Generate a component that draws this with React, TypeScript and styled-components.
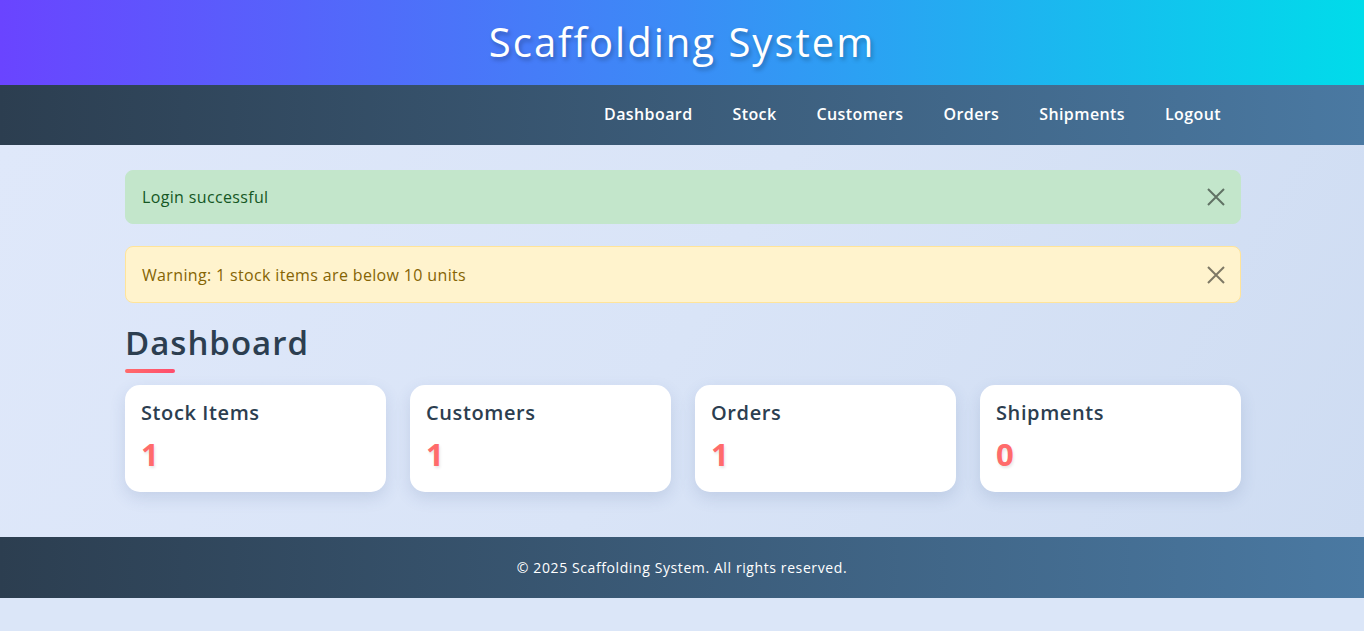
import styled, { createGlobalStyle } from "styled-components";

const GlobalStyle = createGlobalStyle`
  * { box-sizing: border-box; }
  body {
    margin: 0;
    font-family: "Open Sans", "Noto Sans", sans-serif;
    background: #dbe6f8;
  }
`;

const navLinks = ["Dashboard", "Stock", "Customers", "Orders", "Shipments", "Logout"];

const stats = [
  { label: "Stock Items", value: 1 },
  { label: "Customers", value: 1 },
  { label: "Orders", value: 1 },
  { label: "Shipments", value: 0 },
];

const CloseIcon = () => (
  <svg width="18" height="18" viewBox="0 0 18 18">
    <path d="M1 1 L17 17 M17 1 L1 17" stroke="currentColor" strokeWidth="2" />
  </svg>
);

export default function App() {
  return (
    <>
      <GlobalStyle />
      <Header>
        <Title>Scaffolding System</Title>
      </Header>
      <Nav>
        <NavInner>
          {navLinks.map((l) => (
            <NavLink key={l} href="#">
              {l}
            </NavLink>
          ))}
        </NavInner>
      </Nav>
      <Main>
        <Container>
          <Alert $kind="success">
            Login successful
            <CloseBtn>
              <CloseIcon />
            </CloseBtn>
          </Alert>
          <Alert $kind="warning">
            Warning: 1 stock items are below 10 units
            <CloseBtn>
              <CloseIcon />
            </CloseBtn>
          </Alert>
          <Heading>Dashboard</Heading>
          <CardGrid>
            {stats.map((s) => (
              <Card key={s.label}>
                <CardTitle>{s.label}</CardTitle>
                <CardValue>{s.value}</CardValue>
              </Card>
            ))}
          </CardGrid>
        </Container>
      </Main>
      <Footer>© 2025 Scaffolding System. All rights reserved.</Footer>
    </>
  );
}

const Header = styled.header`
  height: 85px;
  display: flex;
  align-items: center;
  justify-content: center;
  padding-bottom: 2px;
  background: linear-gradient(90deg, #6a44ff 0%, #3b8cf6 50%, #00dcea 100%);
`;

const Title = styled.h1`
  margin: 0;
  color: #fff;
  font-size: 40px;
  font-weight: 500;
  letter-spacing: 2px;
  text-shadow: 2px 3px 4px rgba(0, 0, 0, 0.25);
`;

const Nav = styled.nav`
  height: 60px;
  background: linear-gradient(90deg, #2c3e50 0%, #4a79a2 100%);
`;

const NavInner = styled.div`
  width: 1118px;
  padding-left: 2px;
  margin: 0 auto;
  height: 100%;
  display: flex;
  align-items: center;
  justify-content: flex-end;
  padding-bottom: 2px;
`;

const NavLink = styled.a`
  color: #fff;
  text-decoration: none;
  font-size: 16px;
  font-weight: 600;
  letter-spacing: 0.4px;
  padding: 0 20px;
`;

const Main = styled.main`
  background: linear-gradient(120deg, #dfe8fa 0%, #d9e4f7 50%, #cedcf2 100%);
  padding: 25px 0 45px;
`;

const Container = styled.div`
  width: 1118px;
  padding-left: 2px;
  margin: 0 auto;
`;

const Alert = styled.div<{ $kind: "success" | "warning" }>`
  display: flex;
  align-items: center;
  justify-content: space-between;
  padding: 0 15px 0 16px;
  border-radius: 8px;
  font-size: 16px;
  letter-spacing: 0.35px;
  height: ${(p) => (p.$kind === "success" ? "54px" : "57px")};
  margin-bottom: 22px;
  background: ${(p) => (p.$kind === "success" ? "#c3e6cb" : "#fff3cd")};
  color: ${(p) => (p.$kind === "success" ? "#155724" : "#856404")};
  border: 1px solid ${(p) => (p.$kind === "success" ? "#c3e6cb" : "#ffe49a")};
`;

const CloseBtn = styled.button`
  border: none;
  background: none;
  padding: 0;
  display: flex;
  color: #000;
  opacity: 0.5;
  cursor: pointer;
`;

const Heading = styled.h2`
  position: relative;
  margin: -2px 0 12px;
  padding-bottom: 10px;
  font-size: 33px;
  font-weight: 600;
  letter-spacing: 1px;
  color: #2c3e50;
  line-height: 1.2;
  &::after {
    content: "";
    position: absolute;
    left: 0;
    bottom: 0;
    width: 50px;
    height: 4px;
    border-radius: 2px;
    background: linear-gradient(90deg, #ff6b6b, #ff4d6d);
  }
`;

const CardGrid = styled.div`
  display: grid;
  grid-template-columns: repeat(4, 1fr);
  gap: 24px;
`;

const Card = styled.div`
  background: #fff;
  border-radius: 15px;
  height: 107px;
  padding: 14px 16px;
  box-shadow: 0 6px 16px rgba(60, 90, 140, 0.15);
`;

const CardTitle = styled.h3`
  margin: 0 0 10px;
  font-size: 20px;
  font-weight: 600;
  letter-spacing: 0.6px;
  color: #2c3e50;
`;

const CardValue = styled.div`
  font-size: 31px;
  font-weight: 700;
  color: #ff6b6b;
  text-shadow: 1px 2px 3px rgba(0, 0, 0, 0.1);
  line-height: 1.2;
`;

const Footer = styled.footer`
  height: 61px;
  display: flex;
  align-items: center;
  justify-content: center;
  color: #fff;
  font-size: 14px;
  letter-spacing: 0.6px;
  background: linear-gradient(90deg, #2c3e50 0%, #4a79a2 100%);
`;
